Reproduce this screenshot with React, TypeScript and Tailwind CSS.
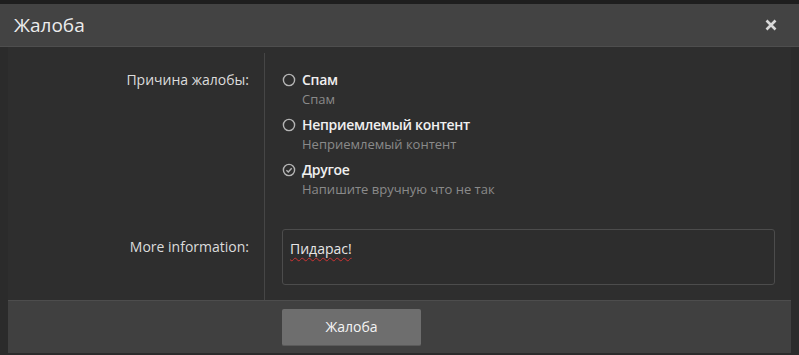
import React from 'react';

const options = [
  { title: 'Спам', hint: 'Спам', checked: false },
  { title: 'Неприемлемый контент', hint: 'Неприемлемый контент', checked: false },
  { title: 'Другое', hint: 'Напишите вручную что не так', checked: true },
];

function Radio({ checked }: { checked: boolean }) {
  return (
    <svg width="14" height="14" viewBox="0 0 14 14" className="shrink-0 mt-[3px]">
      <circle cx="7" cy="7" r="5.6" fill="none" stroke="#b5b5b5" strokeWidth="1.4" />
      {checked && <path d="M4.4 7.2 L6.3 9 L9.7 5.2" fill="none" stroke="#b5b5b5" strokeWidth="1.4" />}
    </svg>
  );
}

export default function App() {
  return (
    <div
      className="w-[799px] h-[355px] bg-[#2b2b2b] flex flex-col overflow-hidden"
      style={{ fontFamily: '"Open Sans", "Noto Sans", sans-serif' }}
    >
      <div className="h-[4px] bg-[#1e1e1e] shrink-0" />

      {/* Header */}
      <div className="h-[43px] bg-[#434343] border-b border-[#4e4e4e] flex items-center justify-between pl-[14px] pr-[22px] shrink-0">
        <span className="text-[19px] text-[#ececec]">Жалоба</span>
        <svg width="12" height="12" viewBox="0 0 12 12">
          <path d="M1.5 1.5 L10.5 10.5 M10.5 1.5 L1.5 10.5" stroke="#d8d8d8" strokeWidth="2.6" />
        </svg>
      </div>

      {/* Body */}
      <div className="mx-[8px] flex-1 bg-[#2e2e2e] flex flex-col pt-[6px]">
        <div className="flex flex-1">
          <div className="w-[257px] border-r border-[#464646] flex flex-col items-end pr-[15px] text-[14px] text-[#dcdcdc]">
            <div className="pt-[17px] h-[177px] leading-[20px]">Причина жалобы:</div>
            <div className="pt-[7px] leading-[20px]">More information:</div>
          </div>
          <div className="flex-1 pl-[17px] pr-[16px] pt-[17px] pb-[15px] flex flex-col">
            {options.map((o) => (
              <div key={o.title} className="flex gap-[6px] mb-[7px]">
                <Radio checked={o.checked} />
                <div className="flex flex-col">
                  <span className="text-[14px] leading-[20px] font-semibold tracking-[-0.3px] text-[#f0f0f0]">{o.title}</span>
                  <span className="text-[13px] leading-[18px] text-[#8a8a8a]">{o.hint}</span>
                </div>
              </div>
            ))}
            <div className="mt-[24px] h-[56px] border border-[#4c4c4c] rounded-[3px] bg-[#2d2d2d] px-[7px] pt-[6px]">
              <span className="text-[14px] leading-[20px] text-[#e6e6e6] underline decoration-wavy decoration-[#c33] decoration-1 underline-offset-[3px]">
                Пидарас!
              </span>
            </div>
          </div>
        </div>

        {/* Footer */}
        <div className="h-[53px] bg-[#404040] border-t border-[#4d4d4d] flex items-center pl-[274px] shrink-0">
          <button className="w-[139px] h-[37px] bg-[#6e6e6e] rounded-[2px] border-b border-[#5a5a5a] text-[14px] text-[#f4f4f4]">
            Жалоба
          </button>
        </div>
      </div>
      <div className="h-[2px] shrink-0" />
    </div>
  );
}
